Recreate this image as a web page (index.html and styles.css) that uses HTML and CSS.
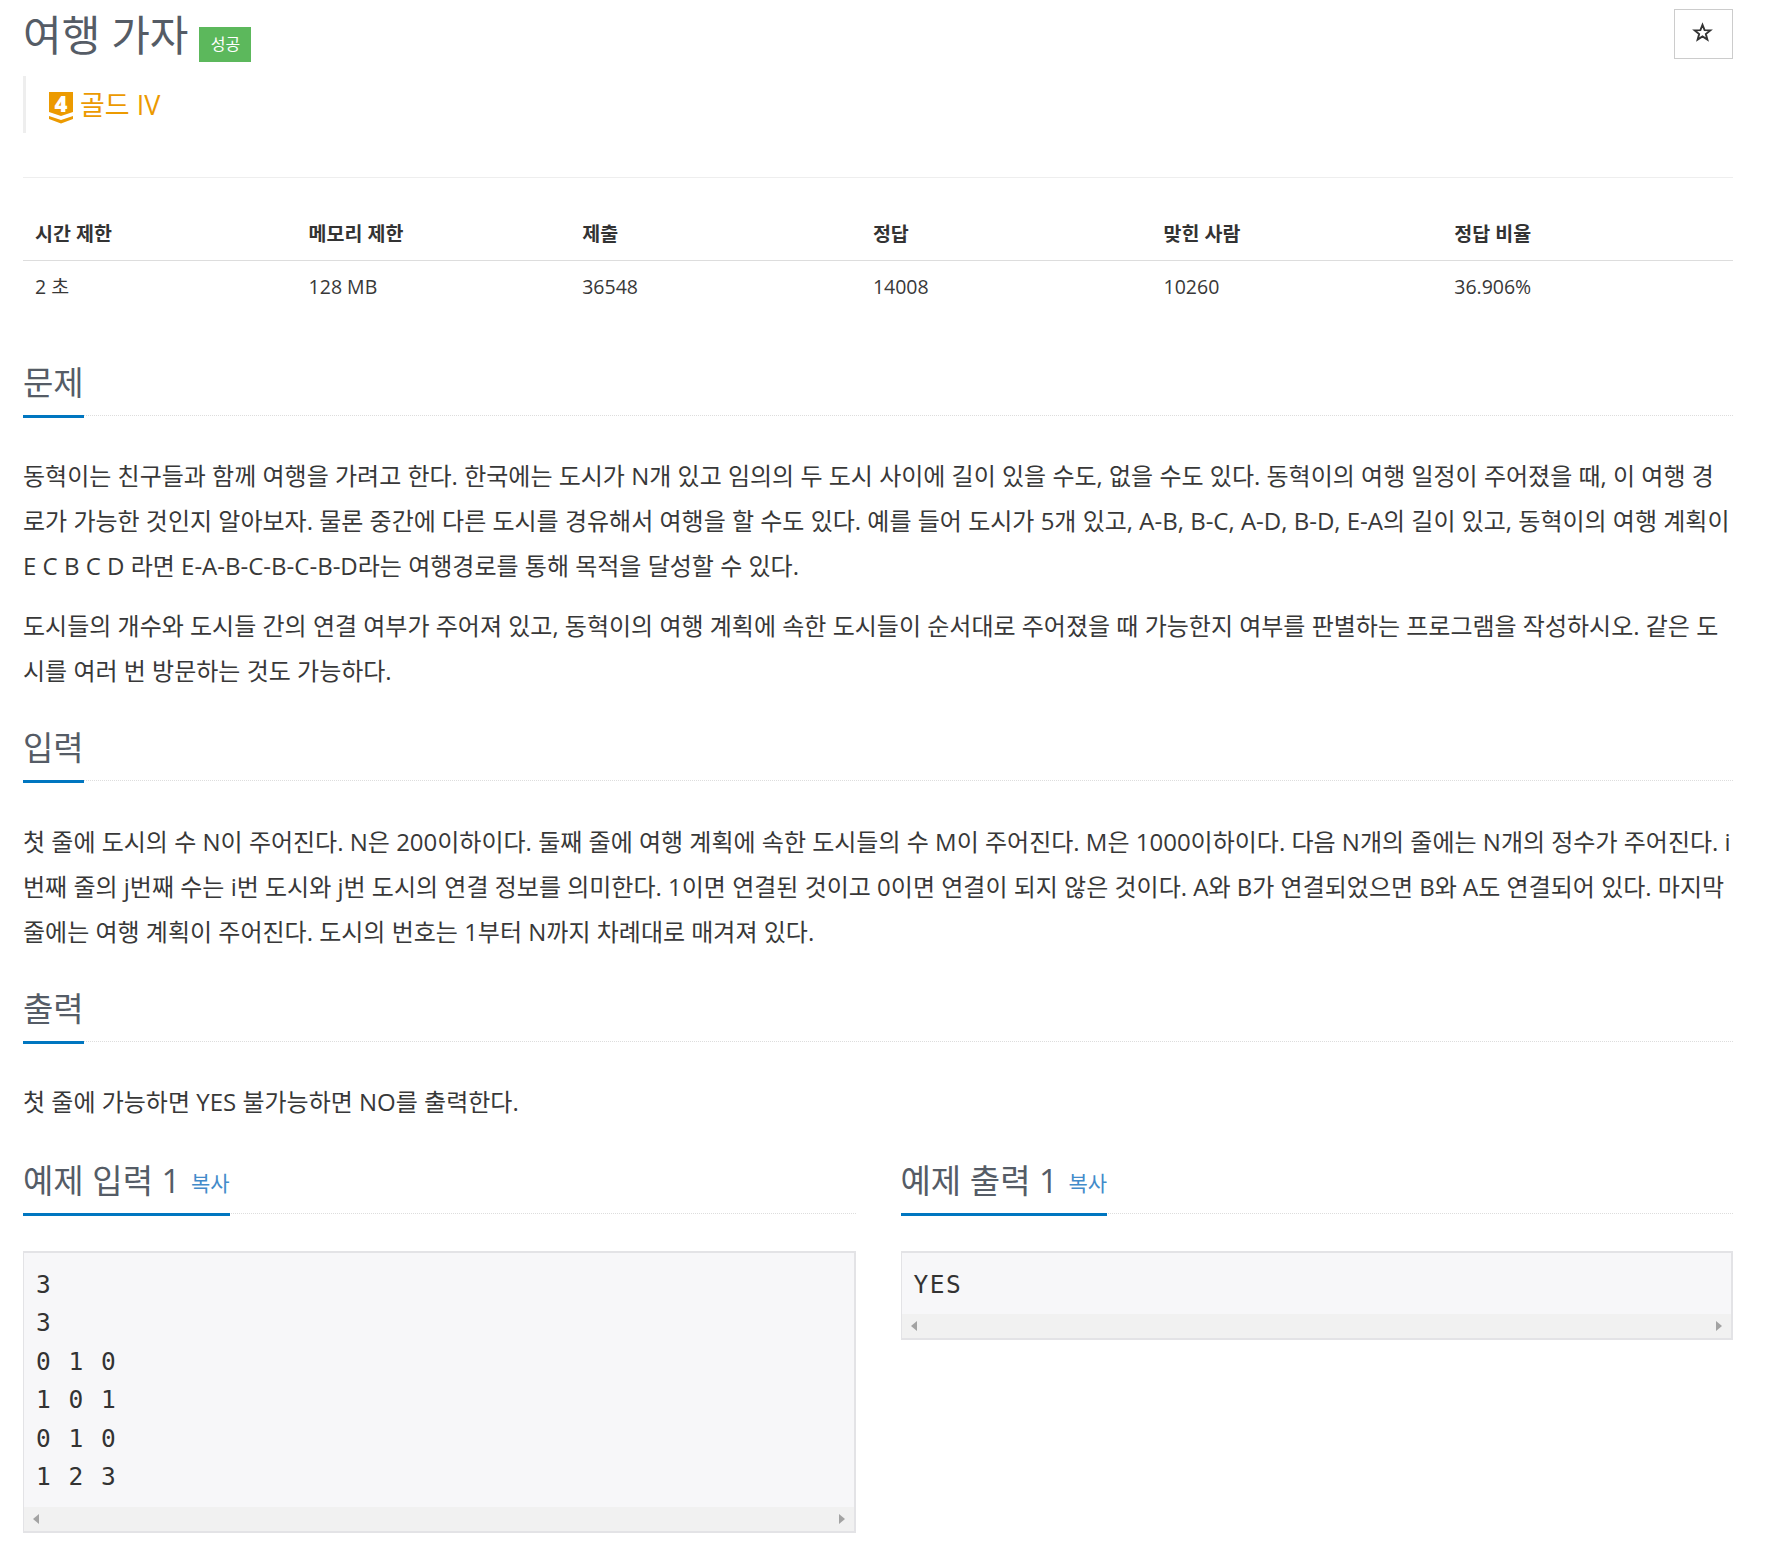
FILE: index.html
```html
<!DOCTYPE html>
<html lang="ko">
<head>
<meta charset="utf-8">
<title>여행 가자</title>
<link rel="stylesheet" href="styles.css">
</head>
<body>
<div class="page">
  <div class="title-row">
    <div class="title-main">
      <span class="title">여행 가자</span>
      <span class="label">성공</span>
    </div>
    <button class="star-btn" type="button" aria-label="즐겨찾기"><svg class="star" viewBox="0 0 22 21" width="21" height="20"><path fill="none" stroke="#333" stroke-width="2" stroke-linejoin="miter" d="M11 3L13.2 8.6L19.2 8.8L14.5 12.6L16.1 18.4L11 15.1L5.9 18.4L7.5 12.6L2.8 8.8L8.8 8.6Z"/></svg></button>
  </div>
  <div class="tier">
    <svg class="tier-icon" viewBox="0 0 24 32" width="24" height="32"><path fill="#ec9a00" d="M0 0H24V20L12 24L0 20Z"/><path fill="#ec9a00" d="M0 24L12 28L24 24V27L12 31.5L0 27Z"/><text x="12" y="19.7" class="tier-num" text-anchor="middle">4</text></svg>
    <span class="tier-text">골드 IV</span>
  </div>
  <hr class="rule">
  <table class="info">
    <thead>
      <tr><th class="c16">시간 제한</th><th class="c16">메모리 제한</th><th class="c17">제출</th><th class="c17">정답</th><th class="c17">맞힌 사람</th><th class="c17">정답 비율</th></tr>
    </thead>
    <tbody>
      <tr><td>2 초</td><td>128 MB</td><td>36548</td><td>14008</td><td>10260</td><td>36.906%</td></tr>
    </tbody>
  </table>

  <section class="sec first">
    <div class="head"><h2 class="head-title">문제</h2></div>
    <div class="body tight">
      <p>동혁이는 친구들과 함께 여행을 가려고 한다. 한국에는 도시가 N개 있고 임의의 두 도시 사이에 길이 있을 수도, 없을 수도 있다. 동혁이의 여행 일정이 주어졌을 때, 이 여행 경로가 가능한 것인지 알아보자. 물론 중간에 다른 도시를 경유해서 여행을 할 수도 있다. 예를 들어 도시가 5개 있고, A-B, B-C, A-D, B-D, E-A의 길이 있고, 동혁이의 여행 계획이 E C B C D 라면 E-A-B-C-B-C-B-D라는 여행경로를 통해 목적을 달성할 수 있다.</p>
      <p>도시들의 개수와 도시들 간의 연결 여부가 주어져 있고, 동혁이의 여행 계획에 속한 도시들이 순서대로 주어졌을 때 가능한지 여부를 판별하는 프로그램을 작성하시오. 같은 도시를 여러 번 방문하는 것도 가능하다.</p>
    </div>
  </section>

  <section class="sec">
    <div class="head"><h2 class="head-title">입력</h2></div>
    <div class="body">
      <p>첫 줄에 도시의 수 N이 주어진다. N은 200이하이다. 둘째 줄에 여행 계획에 속한 도시들의 수 M이 주어진다. M은 1000이하이다. 다음 N개의 줄에는 N개의 정수가 주어진다. i번째 줄의 j번째 수는 i번 도시와 j번 도시의 연결 정보를 의미한다. 1이면 연결된 것이고 0이면 연결이 되지 않은 것이다. A와 B가 연결되었으면 B와 A도 연결되어 있다. 마지막 줄에는 여행 계획이 주어진다. 도시의 번호는 1부터 N까지 차례대로 매겨져 있다.</p>
    </div>
  </section>

  <section class="sec">
    <div class="head"><h2 class="head-title">출력</h2></div>
    <div class="body tight">
      <p>첫 줄에 가능하면 YES 불가능하면 NO를 출력한다.</p>
    </div>
  </section>

  <div class="examples">
    <div class="example">
      <div class="head ex-head"><h2 class="head-title">예제 입력 1 <a class="copy">복사</a></h2></div>
      <div class="code-box">
        <pre class="code">3
3
0 1 0
1 0 1
0 1 0
1 2 3</pre>
        <div class="scroll"><span class="arrow left"></span><span class="arrow right"></span></div>
      </div>
    </div>
    <div class="example">
      <div class="head ex-head"><h2 class="head-title">예제 출력 1 <a class="copy">복사</a></h2></div>
      <div class="code-box">
        <pre class="code">YES</pre>
        <div class="scroll"><span class="arrow left"></span><span class="arrow right"></span></div>
      </div>
    </div>
  </div>
</div>
</body>
</html>
```
FILE: styles.css
```css
* { box-sizing: border-box; }
html, body { margin: 0; background: #fff; }
body {
  font-family: "Open Sans", "Noto Sans CJK KR", sans-serif;
  font-size: 18px;
  color: #383838;
}
.page { padding: 0 33px 0 23px; }
.title-row { display: flex; justify-content: space-between; align-items: flex-start; height: 76px; }
.title-main { display: flex; align-items: flex-start; padding-top: 9px; }
.title { font-size: 42px; line-height: 52px; font-weight: 400; color: #555c66; }
.label {
  margin: 18px 0 0 11px; width: 52px; height: 35px; background: #5cb85c; color: #fff;
  font-size: 16px; line-height: 35px; text-align: center;
}
.star-btn {
  display: flex; align-items: center; justify-content: center;
  margin-top: 9px; width: 59px; height: 50px; padding: 0 2px 4px 0; background: #fff;
  border: 1px solid #ccc;
}
.star { display: block; }
.tier {
  display: flex; align-items: flex-start; height: 57px; border-left: 3px solid #eee;
  padding: 16px 0 0 23px;
}
.tier-icon { display: block; overflow: visible; }
.tier-num { font-family: "Open Sans", sans-serif; font-weight: 800; font-size: 22px; fill: #fff; }
.tier-text { margin-left: 7px; font-size: 27px; line-height: 30px; color: #ec9a00; margin-top: -2px; }
.rule { border: 0; border-top: 1px solid #eee; margin: 44px 0 0; height: 0; }

.info { width: 100%; border-collapse: collapse; table-layout: fixed; margin-top: 37px; }
.c16 { width: 16%; }
.c17 { width: 17%; }
.info th {
  text-align: left; font-size: 19.5px; font-weight: 700; padding: 2px 12px 9px; height: 45px;
  line-height: 34px; border-bottom: 1px solid #ddd; color: #333;
}
.info td { padding: 0 12px; height: 52px; line-height: 50px; font-size: 19.5px; }

.sec { margin-top: 31px; }
.sec.first { margin-top: 46px; }
.head { border-bottom: 1px dotted #ddd; height: 57px; }
.head-title {
  display: inline-block; margin: 0; height: 59px; font-size: 33px; font-weight: 400; line-height: 48px;
  color: #555c66; border-bottom: 3px solid #0076c0; white-space: nowrap;
}
.body { padding-top: 38px; }
.body.tight { padding-top: 37px; }
.body p { margin: 0 0 15px; font-size: 24px; line-height: 45px; }
.body p:last-child { margin-bottom: 0; }
.examples { display: grid; grid-template-columns: 1fr 1fr; column-gap: 45px; margin-top: 33px; align-items: start; }
.copy { font-size: 21px; color: #428bca; margin-left: 2px; vertical-align: 2px; }
.code-box { margin-top: 37px; border: 2px solid #e3e3e6; border-width: 2px 2px 2px 1px; background: #f7f7f9; }
.code {
  margin: 0; padding: 13px 12px 10px; font-family: "DejaVu Sans Mono", monospace; font-size: 24.5px;
  line-height: 38.6px; letter-spacing: 1.5px; color: #333;
}
.scroll { height: 24px; background: #f1f1f1; display: flex; justify-content: space-between; align-items: center; padding: 0 9px; }
.arrow { width: 0; height: 0; border-top: 5.5px solid transparent; border-bottom: 5.5px solid transparent; }
.arrow.left { border-right: 6px solid #a3a3a3; }
.arrow.right { border-left: 6px solid #a3a3a3; }
```
